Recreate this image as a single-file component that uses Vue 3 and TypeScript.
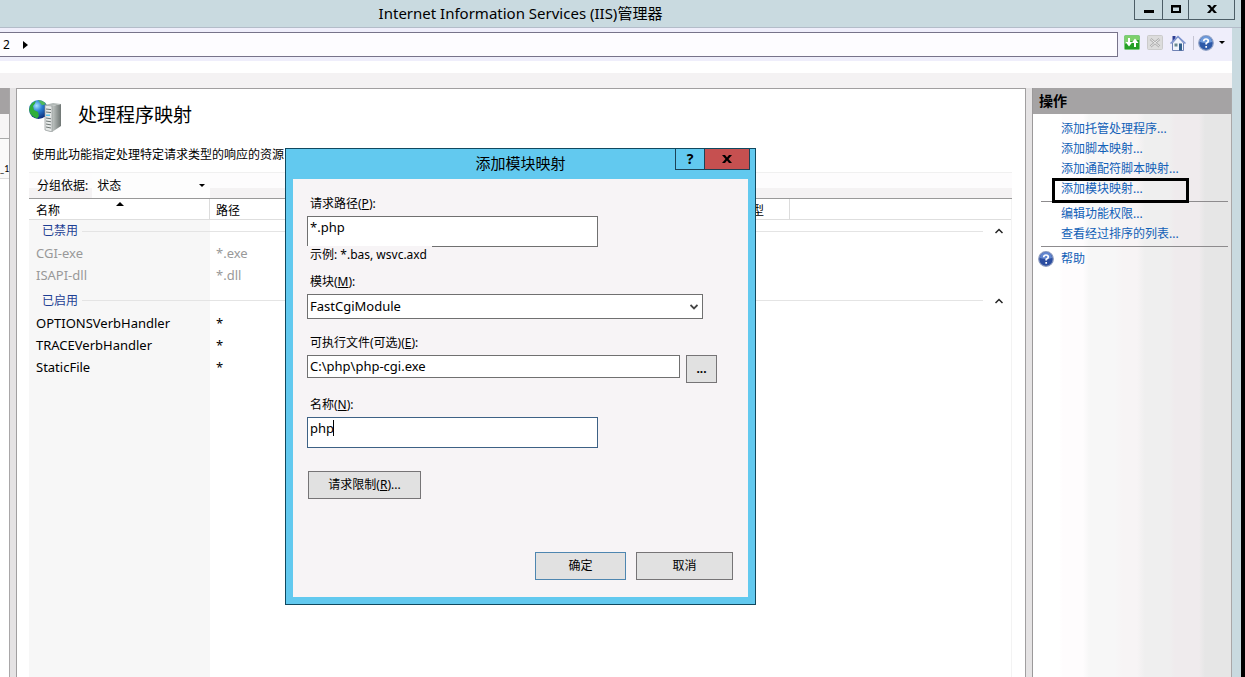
<script setup lang="ts">
import { ref } from 'vue'

interface Handler { name: string; path: string }
interface Group { title: string; disabled: boolean; rows: Handler[] }

const groups: Group[] = [
  {
    title: '已禁用',
    disabled: true,
    rows: [
      { name: 'CGI-exe', path: '*.exe' },
      { name: 'ISAPI-dll', path: '*.dll' },
    ],
  },
  {
    title: '已启用',
    disabled: false,
    rows: [
      { name: 'OPTIONSVerbHandler', path: '*' },
      { name: 'TRACEVerbHandler', path: '*' },
      { name: 'StaticFile', path: '*' },
    ],
  },
]

const addActions = ['添加托管处理程序...', '添加脚本映射...', '添加通配符脚本映射...', '添加模块映射...']
const editActions = ['编辑功能权限...', '查看经过排序的列表...']

const address = ref('2')
const requestPath = ref('*.php')
const moduleName = ref('FastCgiModule')
const executable = ref('C:\\php\\php-cgi.exe')
const mappingName = ref('php')
</script>

<template>
  <div class="screen">
    <div class="window">
      <header class="titlebar">
        <h1>Internet Information Services (IIS)<span class="cjk">管理器</span></h1>
        <div class="win-buttons">
          <button class="min" aria-label="最小化"><svg width="12" height="12"><rect x="1" y="6" width="10" height="3" /></svg></button>
          <button class="max" aria-label="最大化"><svg width="12" height="12"><path d="M1 1h10v8H1zM3 3.500v3.500h6V3.500z" fill-rule="evenodd" /></svg></button>
          <button class="close" aria-label="关闭"><svg width="10" height="10"><path d="M0 0h3l2 2.500L7 0h3L6.500 4 10 8H7L5 5.500 3 8H0l3.500-4z" /></svg></button>
        </div>
      </header>

      <div class="addressbar">
        <div class="address">
          <input v-model="address" aria-label="地址" size="1" />
          <svg width="5" height="8"><path d="M0 0l5 4-5 4z" /></svg>
        </div>
        <div class="tools">
          <button class="tool" aria-label="刷新">
            <svg width="16" height="16">
              <rect x=".5" y=".5" width="15" height="14" rx="1" fill="#25a025" stroke="#7cca7c" />
              <path d="M1 1h14v4Q8 5 1 9z" fill="#7dd06c" />
              <path d="M4 3h2v4h2.500L5 11.500 1.500 7H4zM10 12h2V8h2.500L11 3.500 7.500 8H10z" fill="#fff" />
            </svg>
          </button>
          <button class="tool" aria-label="停止">
            <svg width="16" height="16">
              <rect x=".5" y=".5" width="15" height="14" rx="1" fill="#dcdcdc" stroke="#cbcbcb" />
              <path d="M3.500 4l9 7.500M12.500 4l-9 7.500" stroke="#adadad" stroke-width="2.400" />
              <path d="M3.500 4l9 7.500M12.500 4l-9 7.500" stroke="#ededed" stroke-width="1" />
            </svg>
          </button>
          <button class="tool" aria-label="主页">
            <svg width="16" height="16">
              <path d="M2.500 8v7.500h11V8L8 2z" fill="#f2f5fc" stroke="#7183b5" />
              <path d="M2.500 1h3v3l-3 2.500z" fill="#2d3d92" />
              <path d="M.5 8.500L8 1.500l7.500 7" fill="none" stroke="#7c93cf" stroke-width="1.500" />
              <rect x="4.500" y="8.500" width="3" height="3" fill="#6a8a8e" />
              <rect x="9" y="8.500" width="3" height="7" fill="#315f8c" />
            </svg>
          </button>
          <span class="divider"></span>
          <button class="help-tool" aria-label="帮助菜单">
            <svg width="16" height="16">
              <circle cx="8" cy="8" r="7.300" fill="#2d59a8" stroke="#93a4c7" stroke-width="1.200" />
              <path d="M2 7a6 6 0 0 1 12 0q-6 2-12 0z" fill="#6f9bdc" />
              <path d="M5.700 6.200Q5.800 4 8 4t2.300 1.900Q10.300 7.200 8.200 8.200V9.500M8.200 11v1.700" fill="none" stroke="#fff" stroke-width="1.700" />
            </svg>
            <svg width="6" height="3"><path d="M0 0h6L3 3z" /></svg>
          </button>
        </div>
      </div>
      <div class="menubar"></div>
      <div class="band"></div>

      <div class="content">
        <aside class="tree">
          <div class="tree-head"></div>
          <div class="tree-tools"></div>
          <div class="tree-item">_1</div>
        </aside>

        <main class="feature">
          <div class="feature-head">
            <svg width="34" height="34" viewBox="0 0 34 34">
              <defs>
                <radialGradient id="globe" cx=".4" cy=".3" r=".75">
                  <stop offset="0" stop-color="#a6e4ff" />
                  <stop offset=".4" stop-color="#2a80d4" />
                  <stop offset="1" stop-color="#0a2470" />
                </radialGradient>
                <linearGradient id="tower" x1="0" x2="1">
                  <stop offset="0" stop-color="#c3c8c6" />
                  <stop offset="1" stop-color="#6f7674" />
                </linearGradient>
              </defs>
              <circle cx="9.500" cy="11.500" r="9.500" fill="url(#globe)" />
              <path d="M1 8Q3 4 7 3q-1 3-3 5l1 4 4 2 1 4-2 2.500Q1 18 .2 12z" fill="#2fae3a" />
              <path d="M9 2.300q5-.3 8 4l-4 1z" fill="#4fb85c" />
              <path d="M23 8l9-2v22l-9 6z" fill="url(#tower)" />
              <path d="M16 7l7 1v26l-7-2z" fill="#e6e9e8" stroke="#8d9493" stroke-width=".7" />
              <path d="M16 7l8-2 8 1-9 2z" fill="#b2b9b7" />
              <path d="M17 11l5 .6M17 14l5 .6M17 20l5 .8M17 23l5 .8M17 26l5 .9M17 29l5 1" stroke="#6f7775" />
              <rect x="17" y="16.500" width="4" height="1.500" fill="#59c1ea" />
            </svg>
            <h2>处理程序映射</h2>
          </div>
          <p class="intro">使用此功能指定处理特定请求类型的响应的资源</p>

          <div class="grouping">
            <label for="group-by">分组依据:</label>
            <span class="group-select">
              <select id="group-by"><option>状态</option></select>
              <svg width="6" height="3"><path d="M0 0h6L3 3z" /></svg>
            </span>
          </div>

          <div class="list">
            <table>
              <colgroup><col class="c-name" /><col class="c-path" /><col class="c-type" /><col /></colgroup>
              <thead>
                <tr>
                  <th class="sorted">名称<svg width="8" height="4"><path d="M0 4h8L4 0z" /></svg></th>
                  <th>路径</th>
                  <th>类型</th>
                  <th class="rest"></th>
                </tr>
              </thead>
              <tbody v-for="g in groups" :key="g.title" :class="{ disabled: g.disabled }">
                <tr class="group">
                  <td colspan="4">
                    <div class="group-line">
                      <span>{{ g.title }}</span><i></i>
                      <button :aria-label="'折叠' + g.title"><svg width="8" height="6"><path d="M.5 5L4 1.500 7.500 5" fill="none" stroke="#222" stroke-width="1.500" /></svg></button>
                    </div>
                  </td>
                </tr>
                <tr v-for="r in g.rows" :key="r.name">
                  <td>{{ r.name }}</td>
                  <td>{{ r.path }}</td>
                  <td></td>
                  <td></td>
                </tr>
              </tbody>
            </table>
          </div>
        </main>

        <aside class="actions">
          <h3>操作</h3>
          <nav>
            <a v-for="(a, i) in addActions" :key="a" href="#" :class="{ marked: i === addActions.length - 1 }">{{ a }}</a>
            <hr />
            <a v-for="a in editActions" :key="a" href="#">{{ a }}</a>
            <hr />
            <a href="#" class="help">
              <svg width="16" height="16">
                <circle cx="8" cy="8" r="7.300" fill="#2b4da0" stroke="#8d9cc0" stroke-width="1.200" />
                <path d="M2 7a6 6 0 0 1 12 0q-6 2-12 0z" fill="#6286cf" />
                <path d="M5.700 6.200Q5.800 4 8 4t2.300 1.900Q10.300 7.200 8.200 8.200V9.500M8.200 11v1.700" fill="none" stroke="#fff" stroke-width="1.700" />
              </svg>帮助
            </a>
          </nav>
        </aside>
      </div>
    </div>

    <form class="dialog" role="dialog" aria-labelledby="dialog-title" @submit.prevent>
      <header>
        <h2 id="dialog-title">添加模块映射</h2>
        <div class="dialog-buttons">
          <button type="button" class="q">?</button>
          <button type="button" class="x" aria-label="关闭对话框"><svg width="10" height="10"><path d="M0 1h3l2 2.500L7 1h3L6.500 5 10 9H7L5 6.500 3 9H0l3.500-4z" /></svg></button>
        </div>
      </header>
      <div class="dialog-body">
        <label for="request-path">请求路径(<u>P</u>):</label>
        <input id="request-path" v-model="requestPath" class="tall" />
        <p class="hint">示例: <span>*.bas, wsvc.axd</span></p>

        <label for="module">模块(<u>M</u>):</label>
        <span class="combo">
          <select id="module" v-model="moduleName"><option>FastCgiModule</option></select>
          <svg width="8" height="6"><path d="M.5 1L4 4.500 7.500 1" fill="none" stroke="#444" stroke-width="1.800" /></svg>
        </span>

        <label for="executable" class="after-combo">可执行文件(可选)(<u>E</u>):</label>
        <div class="file-row">
          <input id="executable" v-model="executable" />
          <button type="button" class="btn browse">...</button>
        </div>

        <label for="mapping-name" class="after-file">名称(<u>N</u>):</label>
        <div class="name-box">
          <input id="mapping-name" v-model="mappingName" class="tall focused" />
          <i class="caret"></i>
        </div>

        <button type="button" class="btn limits">请求限制(<u>R</u>)...</button>
        <footer>
          <button class="btn ok">确定</button>
          <button type="button" class="btn cancel">取消</button>
        </footer>
      </div>
    </form>
  </div>
</template>

<style>
body { margin: 0; background: #000; }
</style>

<style scoped>
*, *::after { box-sizing: border-box; }
.screen {
  position: relative;
  min-height: 100vh;
  display: flex;
  padding-right: 4px;
  overflow: hidden;
  background: #000;
  color: #000;
  font: 12px/18px "Noto Sans", "Noto Sans CJK SC", sans-serif;
}
h1, h2, h3, p { margin: 0; font-weight: 400; }
button, input, select { font: inherit; color: inherit; margin: 0; border-radius: 0; outline: none; }
button { padding: 0; border: 0; background: none; }
svg { display: block; flex: none; }
select { appearance: none; }

.window { flex: 1; min-width: 0; display: flex; flex-direction: column; padding-right: 9px; background: #c9dae0; }
.titlebar { position: relative; height: 28px; margin-right: -9px; border-bottom: 1px solid #b3bcc9; display: flex; justify-content: center; }
.titlebar h1 { padding-right: 200px; font-size: 15px; line-height: 27px; }
.win-buttons { position: absolute; top: 0; right: 6px; height: 20px; display: flex; border: 1px solid #4c5d66; border-top: 0; }
.win-buttons button { display: flex; align-items: center; justify-content: center; border-right: 1px solid #4c5d66; }
.win-buttons button:last-child { border-right: 0; }
.min { width: 28px; }
.max { width: 26px; }
.close { width: 45px; }

.addressbar { height: 33px; display: flex; align-items: center; background: #efeefb; padding-right: 7px; }
.address { flex: 1; height: 25px; display: flex; align-items: center; background: #fdfcff; border: 1px solid #77738a; border-left: 0; margin-right: 6px; }
.address input { width: 23px; padding: 0 0 0 3px; border: 0; background: none; }
.tools { display: flex; align-items: center; padding-bottom: 4px; }
.tool { width: 16px; margin-right: 7px; }
.divider { width: 1px; height: 14px; background: #c5c4d2; margin-right: 4px; }
.help-tool { display: flex; align-items: center; gap: 5px; }
.menubar { height: 12px; background: #fff; }
.band { height: 15px; background: #f4f2f3; }

.content { flex: 1; display: flex; background: #e5e3e4; }
.tree { width: 10px; background: #fff; border-right: 1px solid #a9a7a8; }
.tree-head { height: 26px; background: #a5a2a3; }
.tree-tools { height: 25px; background: #f7f5f6; border-bottom: 1px solid #aaa; }
.tree-item { height: 40px; padding-top: 21px; background: #fafafa; border-bottom: 1px solid #ddd; font-family: Lato, sans-serif; font-size: 9px; white-space: nowrap; }

.feature { flex: 1; min-width: 0; display: flex; flex-direction: column; margin-left: 6px; background: #fff; border: 1px solid #a19fa0; border-bottom: 0; padding: 0 13px 0 12px; }
.feature-head { display: flex; align-items: center; height: 50px; gap: 15px; padding-top: 2px; }
.feature-head h2 { font-size: 19px; line-height: 28px; }
.intro { padding: 7px 0 8px 3px; white-space: nowrap; }
.grouping { height: 27px; display: flex; align-items: center; padding-left: 8px; border-top: 1px solid #f0f0f0; border-bottom: 1px solid #999; background: linear-gradient(#fdfcfd 60%, #f4f2f3 60%); }
.group-select { display: flex; align-items: center; width: 118px; height: 100%; margin-left: 4px; background: #fdfdfd; padding-left: 5px; }
.group-select select { flex: 1; min-width: 0; border: 0; padding: 0; background: none; }
.group-select svg { margin-right: 5px; }
.list { flex: 1; background: linear-gradient(to right, #f7f7f7 181px, #fff 181px); border-right: 1px solid #f3f3f3; }
table { width: 100%; table-layout: fixed; border-collapse: separate; border-spacing: 0; }
.c-name { width: 181px; }
.c-path { width: 524px; }
.c-type { width: 56px; }
th { height: 21px; padding: 2px 6px 0; line-height: 17px; text-align: left; font-weight: 400; background: #fff; border-right: 1px solid #dcdcdc; border-bottom: 1px solid #dedede; }
th.rest { border-right: 0; }
th.sorted { position: relative; }
th:first-child, td:first-child { padding-left: 7px; }
th.sorted svg { position: absolute; left: 87px; top: 3px; }
td { height: 22px; padding: 0 6px; font-size: 13px; white-space: nowrap; }
.disabled td { color: #999; }
tbody + tbody .group td { height: 26px; padding-top: 3px; }
tbody .group td { font-size: 12px; color: #1e3f94; }
.group-line { display: flex; align-items: center; padding-left: 6px; gap: 4px; }
.group-line i { flex: 1; height: 1px; background: #e4e4e4; margin-right: 6px; }
.group-line button { width: 12px; display: flex; justify-content: center; }

.actions {
  width: 200px;
  margin-left: 6px;
  border-left: 1px solid #9b999a;
  border-right: 1px solid #a9a7a8;
  background: linear-gradient(to right, #fff 26px, #fefcfd 30px 50px, #f7f7f7 56px 82px, #f7f4f5 90px 104px, #efefef 112px 136px, #efebed 142px 166px, #e6e6e6 172px);
}
.actions h3 { height: 26px; padding-left: 6px; line-height: 26px; font-weight: 700; background: #a5a3a4; }
.actions nav { padding: 5px 3px 0 8px; }
.actions a { position: relative; display: block; height: 20px; line-height: 20px; padding-left: 20px; color: #1160b7; text-decoration: none; white-space: nowrap; }
.actions hr { height: 1px; margin: 2px 0; border: 0; background: #8d8b8d; }
.marked::after { content: ""; position: absolute; left: 11px; top: -1px; width: 137px; height: 25px; border: 3px solid #000; z-index: 1; }
.actions .help { display: flex; align-items: center; gap: 7px; padding-left: 0; margin-left: -3px; }

.dialog { position: absolute; left: 285px; top: 148px; width: 471px; background: #62c9ef; border: 1px solid #10485f; padding: 0 7px 7px; }
.dialog header { position: relative; height: 30px; }
.dialog header h2 { text-align: center; font-size: 15px; line-height: 28px; }
.dialog-buttons { position: absolute; top: 0; right: -2px; height: 21px; display: flex; border: 1px solid #1c4256; border-top: 0; }
.dialog-buttons button { display: flex; align-items: center; justify-content: center; }
.q { width: 28px; font-weight: 700; font-size: 14px; }
.x { width: 45px; background: #c65050; border-left: 1px solid #1c4256; }
.dialog-body { height: 418px; background: #f7f4f6; padding: 16px 15px 17px 14px; display: flex; flex-direction: column; align-items: flex-start; }
.dialog-body label { padding-left: 3px; margin-bottom: 3px; }
.dialog-body input { height: 23px; padding: 0 2px 2px; background: #fff; border: 1px solid #707070; font-size: 13px; }
.dialog-body input.tall { width: 291px; height: 31px; padding-bottom: 9px; }
.dialog-body input.focused { border-color: #3d6185; }
.hint { position: relative; margin: -1px 0 9px; padding: 0 5px 0 3px; background: #f7f4f6; }
.combo { position: relative; width: 396px; height: 25px; display: flex; }
.combo select { flex: 1; padding: 0 2px 2px; background: #fff; border: 1px solid #707070; font-size: 13px; }
.combo svg { position: absolute; right: 5px; top: 10px; pointer-events: none; }
.after-combo { margin-top: 15px; }
.file-row { display: flex; align-items: flex-start; gap: 6px; }
.file-row input { width: 373px; }
.after-file { margin-top: 13px; }
.name-box { position: relative; display: flex; }
.caret { position: absolute; left: 26px; top: 3px; width: 1px; height: 16px; background: #000; }
.btn { height: 28px; background: #e1e1e1; border: 1px solid #767476; }
.browse { width: 31px; font-weight: 700; }
.limits { width: 113px; margin: 23px 0 0 1px; }
.dialog-body footer { align-self: flex-end; margin-top: auto; display: flex; gap: 10px; }
.ok { width: 91px; border-color: #4e86b0; }
.cancel { width: 97px; }
</style>
